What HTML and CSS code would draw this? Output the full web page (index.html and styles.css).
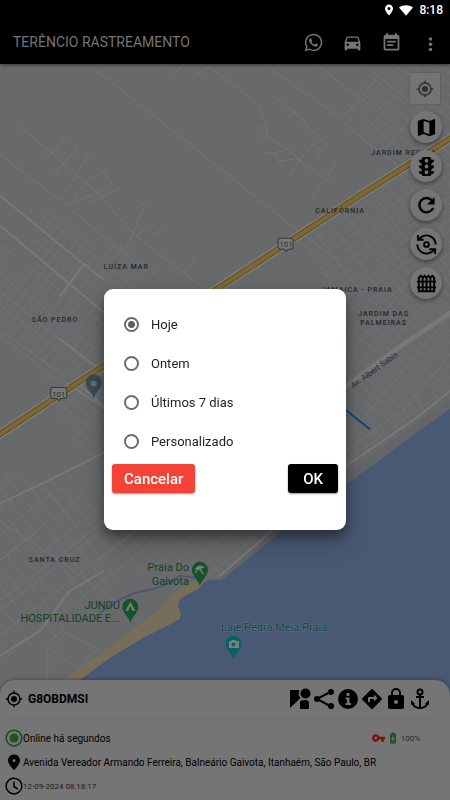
FILE: index.html
```html
<!DOCTYPE html>
<html lang="pt-BR">
<head>
<meta charset="utf-8">
<meta name="viewport" content="width=device-width, initial-scale=1">
<title>Terêncio Rastreamento</title>
<link rel="stylesheet" href="styles.css">
</head>
<body>
<div class="app">
  <header class="top">
    <div class="status">
      <svg class="status-icon" viewBox="0 0 24 24"><path fill-rule="evenodd" d="M12 1C7.600 1 4 4.600 4 9c0 6 8 14 8 14s8-8 8-14c0-4.400-3.600-8-8-8zm0 5a3 3 0 1 1 0 6 3 3 0 0 1 0-6z"/></svg>
      <svg class="status-wifi" viewBox="0 0 24 18"><path d="M12 18L0 4C3.500 1.300 7.600 0 12 0s8.500 1.300 12 4z"/></svg>
      <span>8:18</span>
    </div>
    <div class="appbar">
      <h1>TERÊNCIO RASTREAMENTO</h1>
      <nav class="actions">
        <button aria-label="WhatsApp"><svg viewBox="0 0 24 24"><path d="M12.040 2C6.580 2 2.130 6.450 2.130 11.910C2.130 13.660 2.590 15.360 3.450 16.860L2.050 22L7.300 20.620C8.750 21.410 10.380 21.830 12.040 21.830C17.500 21.830 21.950 17.380 21.950 11.920C21.950 9.270 20.920 6.780 19.050 4.910C17.180 3.030 14.690 2 12.040 2M12.050 3.670C14.250 3.670 16.310 4.530 17.870 6.090C19.420 7.650 20.280 9.720 20.280 11.920C20.280 16.460 16.580 20.150 12.040 20.150C10.560 20.150 9.110 19.760 7.850 19L7.550 18.830L4.430 19.650L5.260 16.610L5.060 16.290C4.240 15 3.800 13.470 3.800 11.910C3.810 7.370 7.500 3.670 12.050 3.670M8.530 7.330C8.370 7.330 8.100 7.390 7.870 7.640C7.650 7.890 7 8.500 7 9.710C7 10.930 7.890 12.100 8 12.270C8.140 12.440 9.760 14.940 12.250 16C12.840 16.270 13.300 16.420 13.660 16.530C14.250 16.720 14.790 16.690 15.220 16.630C15.700 16.560 16.680 16.030 16.890 15.450C17.100 14.870 17.100 14.380 17.040 14.270C16.970 14.170 16.810 14.110 16.560 14C16.310 13.860 15.090 13.260 14.870 13.180C14.640 13.100 14.500 13.060 14.310 13.300C14.150 13.550 13.670 14.110 13.530 14.270C13.380 14.440 13.240 14.460 13 14.340C12.740 14.210 11.940 13.950 11 13.110C10.260 12.450 9.770 11.640 9.620 11.390C9.500 11.150 9.610 11 9.730 10.890C9.840 10.780 10 10.600 10.100 10.450C10.230 10.310 10.270 10.200 10.350 10.040C10.430 9.870 10.390 9.730 10.330 9.610C10.270 9.500 9.770 8.260 9.560 7.770C9.360 7.290 9.160 7.350 9 7.340z"/></svg></button>
        <button aria-label="Veículos"><svg viewBox="0 0 24 24"><path d="M18.920 6.010C18.720 5.420 18.160 5 17.500 5h-11c-.66 0-1.210.42-1.420 1.010L3 12v8c0 .55.45 1 1 1h1c.55 0 1-.45 1-1v-1h12v1c0 .55.45 1 1 1h1c.55 0 1-.45 1-1v-8zM6.500 16a1.500 1.500 0 1 1 0-3 1.500 1.500 0 0 1 0 3zm11 0a1.500 1.500 0 1 1 0-3 1.500 1.500 0 0 1 0 3zM5 11l1.500-4.500h11L19 11z" fill-rule="evenodd"/></svg></button>
        <button aria-label="Relatórios"><svg viewBox="0 0 24 24"><path d="M17 10H7v2h10v-2zm2-7h-1V1h-2v2H8V1H6v2H5c-1.110 0-2 .9-2 2v14c0 1.100.89 2 2 2h14c1.100 0 2-.9 2-2V5c0-1.100-.9-2-2-2zm0 16H5V8h14v11zm-5-5H7v2h7v-2z"/></svg></button>
        <button aria-label="Mais opções"><svg viewBox="0 0 24 24"><circle cx="12" cy="8" r="2"/><circle cx="12" cy="14" r="2"/><circle cx="12" cy="20" r="2"/></svg></button>
      </nav>
    </div>
  </header>

  <main class="map">
    <svg class="map-art" viewBox="0 64 450 630" preserveAspectRatio="xMidYMin slice">
      <defs>
        <pattern id="g1" width="24" height="8" patternUnits="userSpaceOnUse" patternTransform="rotate(-52)"><path d="M0 0H24M0 0V8"/></pattern>
        <pattern id="g2" width="17" height="9" patternUnits="userSpaceOnUse" patternTransform="rotate(-36)"><path d="M0 0H17M0 0V9"/></pattern>
        <pattern id="g3" width="12" height="20" patternUnits="userSpaceOnUse" patternTransform="rotate(-38)"><path d="M0 0H12M0 0V20"/></pattern>
        <pattern id="g4" width="26" height="9" patternUnits="userSpaceOnUse" patternTransform="rotate(40)"><path d="M0 0H26M0 0V9"/></pattern>
      </defs>
      <rect y="64" width="450" height="700" fill="#68696b"/>
      <g class="grid">
        <path fill="url(#g1)" d="M37 222L52 206 94 240 135 250 175 292 240 330 200 340 104 356 50 386 0 340V255l25 25z"/>
        <path fill="url(#g2)" d="M300 236L360 198 450 143V275L395 300 330 290z"/>
        <path fill="url(#g4)" d="M385 66H450V130L402 162 340 110zM345 310L385 285 450 270V380L358 446 345 440z"/>
        <path fill="url(#g4)" d="M50 400L104 368V465L85 460z"/>
        <path fill="url(#g3)" d="M0 460L40 480 104 500V530H278L215 575 170 570 130 575 100 600 60 640 0 660z"/>
        <path fill="url(#g2)" d="M345 440L440 388 450 395 346 470z"/>
      </g>
      <g class="roads">
        <path d="M91 66L160 120 297 230 340 262M165 66l10 7 8-8M185 66l15 8 8-8M208 66l49 37 10 24 1 10 24 16 12 11 30 22M267 66L332 112l28 25 90 68M318 66l60 46 72 54M273 95l20 16 34 35M254 129l14-3M262 140l5-8M264 153l12-1 12-3M276 152l5 15M278 161l22-3M301 158l12-14 9 8-7 10M301 158l-12 18M290 116l4-5 12 10M310 199l28-38M365 66L450 134M395 66L450 108"/>
        <path d="M20 126L95 190 135 235 210 292M0 154L60 200 145 270M47 158L68 135M51 178L78 147M60 200L89 155M66 205L108 189M74 198l13-17 17-10 8 13M91 202L120 188M125 250L145 206 134 197M136 238L156 214M150 237L165 226M182 274L196 257M0 244L14 255M0 290L100 372M0 330L60 372M0 520L60 560 130 610M0 600L60 555 104 520M0 560L38 530M50 640l12-10 36 18-20 20-30-22v32M98 560l60-48M40 486L70 515"/>
      </g>
      <g class="roads major">
        <path d="M0 195L84 264 104 279M84 264L60 296M0 225L104 312M60 338L104 372M66 382L104 407M240 289L300 330M80 385L104 405"/>
        <path d="M0 503L40 484 104 452M345 385L400 347 450 312M220 575L345 466 418 416 450 390M0 655L40 630 70 590 104 570"/>
      </g>
      <path class="avenue" d="M340 390L400 346 452 311"/>
      <path fill="#626365" opacity=".6" d="M450 399L345 473 225 572 220 580 345 484 450 408z"/>
      <path fill="none" stroke="#495973" stroke-width="2" d="M100 612Q125 593 145 590T180 575L204 578"/>
      <path fill="#766e59" d="M192 580L173 593 160 608 125 635 93 658 63 679 45 695H85L185 620 203 583z"/>
      <path fill="#495973" d="M450 408L347 483 281 531 222 579 208 579 203 583 200 587 180 598 178 605 181 613 180 618 167 625 143 637 110 657 80 679 60 695V770H450z"/>
      <path d="M-5 437L104 365 215 290 360 195 455 135" fill="none" stroke="#7c7c79" stroke-width="9"/>
      <path d="M-5 437L104 365 215 290 360 195 455 135" fill="none" stroke="#6a4c1d" stroke-width="6"/>
      <path d="M-5 437L104 365 215 290 360 195 455 135" fill="none" stroke="#7a6937" stroke-width="4"/>
      <path d="M345 409L370 429" stroke="#10477a" stroke-width="2"/>
      <g class="shield"><path d="M279 238h13l1 2v6q0 3-3 3h-2l-2 2-2-2h-3q-3 0-3-3v-6z"/><path d="M52 387h14l1 2v6q0 3-3 3h-3l-2 2-2-2h-3q-3 0-3-3v-6z"/></g>
      <g class="shield-text"><text x="286" y="247">101</text><text x="59" y="396">101</text></g>
      <g class="district">
        <text x="371" y="155">JARDIM REGINA</text><text x="315" y="213">CALIFÓRNIA</text>
        <text x="104" y="269">LUÍZA MAR</text><text x="32" y="322">SÃO PEDRO</text>
        <text x="321" y="292">JAMAICA - PRAIA</text><text x="358" y="316">JARDIM DAS</text><text x="360" y="325">PALMEIRAS</text>
        <text x="29" y="561">SANTA CRUZ</text>
      </g>
      <text class="street" transform="translate(353 388) rotate(-36)">Av. Albert Sabin</text>
      <g class="place">
        <text x="189" y="570">Praia Do</text><text x="189" y="584">Gaivota</text>
        <text x="120" y="608">JUNDU</text><text x="120" y="621">HOSPITALIDADE E...</text>
        <text class="sea" x="327" y="630">Laje Pedra Meia Praia</text>
      </g>
      <g fill="#17512b"><path d="M200 585C198 578 192 575 192 569a8 8 0 0 1 16 0c0 6-6 9-8 16z"/><path d="M130.500 622c-2-7-8-10-8-16a8 8 0 0 1 16 0c0 6-6 9-8 16z"/></g>
      <path fill="#096168" d="M233.500 659c-2-7-8-10-8-16a8 8 0 0 1 16 0c0 6-6 9-8 16z"/>
      <path fill="#3a4b54" fill-rule="evenodd" d="M94 398c-2-7-8-10-8-16a8 8 0 0 1 16 0c0 6-6 9-8 16zM94 380a3 3 0 1 0 0 6 3 3 0 0 0 0-6z"/>
      <g fill="#75827a"><path d="M195 568q4-6 10-1l-4 1-4 2zM200 567l4 6-1 1-4-6z"/><circle cx="196" cy="571" r="1"/><path fill-rule="evenodd" d="M130.500 601l5 9h-10zM130.500 605l-2 5h4z"/><path fill-rule="evenodd" d="M229 640h2l1-1h3l1 1h3v7h-10zM233.500 641.500a2 2 0 1 0 0 4 2 2 0 0 0 0-4z"/></g>
    </svg>

    <div class="tools">
      <button class="tool square" aria-label="Minha localização"><svg viewBox="0 0 24 24"><path fill="none" stroke="currentColor" stroke-width="2" d="M12 1v4M12 19v4M1 12h4M19 12h4M12 4a8 8 0 1 0 0 16 8 8 0 0 0 0-16z"/><circle cx="12" cy="12" r="4"/></svg></button>
      <button class="tool" aria-label="Tipo de mapa"><svg viewBox="0 0 24 24"><path fill-rule="evenodd" d="M20.500 3l-.16.03L15 5.100 9 3 3.360 4.900c-.21.07-.36.25-.36.48V20.500c0 .28.22.5.5.5l.16-.03L9 18.900l6 2.100 5.640-1.900c.21-.07.36-.25.36-.48V3.500c0-.28-.22-.5-.5-.5zM15 19l-6-2.110V5l6 2.110z"/></svg></button>
      <button class="tool" aria-label="Trânsito"><svg viewBox="0 0 24 24"><path fill-rule="evenodd" d="M9 2h6a2 2 0 0 1 2 2v1h3c0 2-1 3-3 4v2h3c0 2-1 3-3 4v2h3c0 2-1 3-3 3a2 2 0 0 1-2 2H9a2 2 0 0 1-2-2c-2 0-3-1-3-3h3v-2c-2-1-3-2-3-4h3V9C5 8 4 7 4 5h3V4a2 2 0 0 1 2-2zm3 2a2 2 0 1 0 0 4 2 2 0 0 0 0-4zm0 6a2 2 0 1 0 0 4 2 2 0 0 0 0-4zm0 6a2 2 0 1 0 0 4 2 2 0 0 0 0-4z"/></svg></button>
      <button class="tool" aria-label="Atualizar"><svg viewBox="0 0 24 24"><path fill="none" stroke="currentColor" stroke-width="2.500" d="M18 7A7.500 7.500 0 1 0 19 14.500"/><path d="M20.500 3v8h-8z"/></svg></button>
      <button class="tool" aria-label="Alternar veículo"><svg viewBox="0 0 24 24"><path fill="none" stroke="currentColor" stroke-width="2" d="M7 4A9.500 9.500 0 0 1 21.500 12M17 20A9.500 9.500 0 0 1 2.500 12M3 2v5h6M21 22v-5h-6M3 7l4-3M21 17l-4 3"/><circle cx="12" cy="12" r="2.500" fill="none" stroke="currentColor" stroke-width="2"/></svg></button>
      <button class="tool" aria-label="Cerca virtual"><svg viewBox="0 0 24 24"><path fill="none" stroke="currentColor" stroke-width="2" d="M2 10h20M2 16h20M4 20V6l2-2 2 2v14M8 6l2-2 2 2v14M12 6l2-2 2 2v14M16 6l2-2 2 2v14M3 20h18"/></svg></button>
    </div>
  </main>

  <section class="sheet">
    <div class="sheet-head">
      <svg class="icon-18" viewBox="0 0 24 24"><path fill="none" stroke="currentColor" stroke-width="2" d="M12 1v4M12 19v4M1 12h4M19 12h4M12 4a8 8 0 1 0 0 16 8 8 0 0 0 0-16z"/><circle cx="12" cy="12" r="4"/></svg>
      <h2>G8OBDMSI</h2>
      <div class="sheet-actions">
        <button aria-label="Street View"><svg viewBox="0 0 24 24"><circle cx="17.500" cy="6.500" r="5"/><path d="M2 4q0-1 1-1h8.500q-2 5 1 8L2 21zM12 14q3-1 5-1 3 0 4 2v6q0 1-1 1h-7q-1 0-1-1z"/></svg></button>
        <button aria-label="Compartilhar"><svg viewBox="0 0 24 24"><path fill="none" stroke="currentColor" stroke-width="2" d="M19 4.500L5 12l14 7.500"/><circle cx="19" cy="5" r="3"/><circle cx="5" cy="12" r="3"/><circle cx="19" cy="19" r="3"/></svg></button>
        <button aria-label="Informações"><svg viewBox="0 0 24 24"><path fill-rule="evenodd" d="M12 2a10 10 0 1 0 0 20 10 10 0 0 0 0-20zm-1.500 4h3v3h-3zm-1 4.500h4V16H15v2H9.500v-2H11v-3.500H9.500z"/></svg></button>
        <button aria-label="Rotas"><svg viewBox="0 0 24 24"><path fill-rule="evenodd" d="M21.710 11.290l-9-9a1 1 0 0 0-1.410 0l-9 9a1 1 0 0 0 0 1.410l9 9c.39.39 1.020.39 1.410 0l9-9a1 1 0 0 0 0-1.410zM14 14.500V12h-4v3H8v-4c0-.55.45-1 1-1h5V7.500l3.500 3.500z"/></svg></button>
        <button aria-label="Bloquear"><svg viewBox="0 0 24 24"><path fill-rule="evenodd" d="M18 8h-1V6A5 5 0 0 0 7 6v2H6a2 2 0 0 0-2 2v10a2 2 0 0 0 2 2h12a2 2 0 0 0 2-2V10a2 2 0 0 0-2-2zm-6 9a2 2 0 1 1 0-4 2 2 0 0 1 0 4zm3-9H9V6a3 3 0 0 1 6 0z"/></svg></button>
        <button aria-label="Âncora"><svg viewBox="0 0 24 24"><path fill="none" stroke="currentColor" stroke-width="2" d="M12 7v14M8 10h8M4 15c1 4 4 6 8 6s7-2 8-6"/><circle cx="12" cy="5" r="2.500" fill="none" stroke="currentColor" stroke-width="2"/><path d="M3 13l4 4-4 1zM21 13l-4 4 4 1z"/></svg></button>
      </div>
    </div>
    <div class="row">
      <svg class="icon-18 online" viewBox="0 0 24 24"><circle cx="12" cy="12" r="10.500" fill="none" stroke="currentColor" stroke-width="2"/><circle class="core" cx="12" cy="12" r="6"/></svg>
      <span>Online há segundos</span>
      <div class="power">
        <svg class="key" viewBox="0 0 24 14"><path fill-rule="evenodd" d="M7 0a7 7 0 1 0 6.500 9.500H17V14h5V9.500h2V4.500H13.500A7 7 0 0 0 7 0zm0 4.500a2.500 2.500 0 1 1 0 5 2.500 2.500 0 0 1 0-5z"/></svg>
        <svg class="battery" viewBox="0 0 12 22"><path d="M4 0h4v2h3q1 0 1 1v18q0 1-1 1H1q-1 0-1-1V3q0-1 1-1h3z"/><path class="bolt" d="M7 6v5h3l-5 8v-6H2z"/></svg>
        <span>100%</span>
      </div>
    </div>
    <div class="row">
      <svg class="icon-18" viewBox="0 0 24 24"><path fill-rule="evenodd" d="M12 2c-5 0-8 4-8 8 0 5 8 13 8 13s8-8 8-13c0-4-3-8-8-8zm0 6a2 2 0 1 1 0 4 2 2 0 0 1 0-4z"/></svg>
      <span>Avenida Vereador Armando Ferreira, Balneário Gaivota, Itanhaém, São Paulo, BR</span>
    </div>
    <div class="row">
      <svg class="icon-18" viewBox="0 0 24 24"><path fill="none" stroke="currentColor" stroke-width="2" d="M12 1.500a10.500 10.500 0 1 0 0 21 10.500 10.500 0 0 0 0-21zM12 6v7l5 3"/></svg>
      <time>12-09-2024 08:18:17</time>
    </div>
  </section>
</div>

<div class="overlay">
  <form class="dialog" role="dialog" aria-label="Período">
    <label class="option"><input type="radio" name="periodo" checked><span>Hoje</span></label>
    <label class="option"><input type="radio" name="periodo"><span>Ontem</span></label>
    <label class="option"><input type="radio" name="periodo"><span>Últimos 7 dias</span></label>
    <label class="option"><input type="radio" name="periodo"><span>Personalizado</span></label>
    <div class="buttons">
      <button class="btn cancel" type="button">Cancelar</button>
      <button class="btn ok" type="button">OK</button>
    </div>
  </form>
</div>
</body>
</html>
```
FILE: styles.css
```css
* { box-sizing: border-box; }

body {
  margin: 0;
  background: #757575;
  color: #000;
  font-family: Roboto, "Liberation Sans", sans-serif;
  font-size: 10px;
}

button {
  padding: 0;
  border: 0;
  background: none;
  color: inherit;
  font-family: inherit;
}

svg { display: block; fill: currentColor; }
h1, h2 { margin: 0; }

.app {
  display: flex;
  flex-direction: column;
  min-height: 100vh;
}

/* Top bars */
.top {
  position: relative;
  z-index: 1;
  background: #000;
  color: #757575;
  box-shadow: 0 1px 3px rgba(0, 0, 0, .5);
}

.status {
  display: flex;
  align-items: center;
  justify-content: flex-end;
  gap: 4px;
  height: 20px;
  padding: 0 7px;
  color: #fff;
  font-size: 12px;
  font-weight: 500;
}
.status-icon { width: 12px; height: 12px; }
.status-wifi { width: 14px; height: 11px; margin-right: 2px; }

.appbar {
  display: flex;
  align-items: center;
  justify-content: space-between;
  height: 44px;
  padding: 0 9px 0 13px;
}
.appbar h1 { font-size: 14px; font-weight: 400; }

.actions { display: flex; gap: 18px; }
.actions svg { width: 21px; height: 21px; }

/* Map */
.map {
  position: relative;
  flex: 1;
  min-height: 320px;
  background: #68696b;
}
.map-art {
  position: absolute;
  inset: 0;
  width: 100%;
  height: calc(100% + 15px);
}
.map-art pattern path { fill: none; stroke: #747576; }
.roads { fill: none; stroke: #727374; }
.major { stroke: #777879; stroke-width: 2; }
.avenue { fill: none; stroke: #777879; stroke-width: 5; }
.shield { fill: #777879; stroke: #38393b; }
.shield-text {
  fill: #2c2d2f;
  font-size: 8px;
  text-anchor: middle;
}
.district {
  fill: #252628;
  font-size: 7px;
  font-weight: 500;
  letter-spacing: 1px;
}
.street { fill: #2c2d2f; font-size: 8px; }
.place {
  fill: #143f23;
  font-size: 11px;
  text-anchor: end;
}
.place .sea {
  fill: #12424a;
  stroke: #66757f;
  stroke-width: 1px;
  paint-order: stroke;
}

.tools {
  position: relative;
  display: flex;
  flex-direction: column;
  align-items: flex-end;
  gap: 7px;
  padding: 9px 8px 0 0;
}
.tool {
  display: grid;
  place-items: center;
  width: 32px;
  height: 32px;
  border-radius: 50%;
  background: #757575;
  box-shadow: 0 2px 4px rgba(0, 0, 0, .4);
}
.tool svg { width: 23px; height: 23px; }
.square {
  margin-right: 2px;
  width: 30px;
  height: 31px;
  border-radius: 1px;
  background: #727374;
  color: #303030;
  box-shadow: 0 0 2px rgba(0, 0, 0, .3);
}
.square svg { width: 18px; height: 18px; }

/* Vehicle sheet */
.sheet {
  position: relative;
  padding: 0 18px 2px 5px;
  border-radius: 15px 15px 0 0;
  background: #757575;
  box-shadow: 0 0 4px rgba(0, 0, 0, .4);
}
.sheet-head {
  display: flex;
  align-items: center;
  gap: 5px;
  height: 39px;
  border-bottom: 1px solid #6d6d6d;
  margin-bottom: 7px;
}
.sheet-head h2 { font-size: 12px; font-weight: 700; }
.sheet-actions { display: flex; margin-left: auto; }
.sheet-actions svg { width: 24px; height: 24px; }
.icon-18 { flex: none; width: 18px; height: 18px; }

.row {
  display: flex;
  align-items: center;
  min-height: 24px;
}
.row time { font-size: 8px; color: #1c1c1c; }
.online { color: #0f4f14; }
.core { fill: #235126; }

.power {
  display: flex;
  align-items: center;
  gap: 5px;
  margin-left: auto;
  padding-right: 12px;
  color: #2a2a2a;
  font-size: 8px;
}
.key { width: 13px; height: 8px; color: #7a1510; }
.battery { width: 6px; height: 12px; color: #235126; }
.bolt { fill: #757575; }

/* Period dialog */
.overlay {
  position: fixed;
  inset: 19px 0 0;
  z-index: 2;
  display: grid;
  place-items: center;
}
.dialog {
  width: 242px;
  max-width: 90%;
  padding: 16px 8px 37px;
  border-radius: 9px;
  background: #fff;
  box-shadow: 0 6px 10px 1px rgba(0, 0, 0, .3), 0 12px 24px rgba(0, 0, 0, .25);
}
.option {
  display: flex;
  align-items: center;
  gap: 12px;
  height: 39px;
  padding-left: 12px;
  color: #1f1f1f;
  font-size: 13px;
}
.option input {
  appearance: none;
  width: 15px;
  height: 15px;
  margin: 0;
  border: 2px solid #6b6b6b;
  border-radius: 50%;
}
.option input:checked {
  background: radial-gradient(circle, #5f5f5f 3px, transparent 4px);
}
.buttons {
  display: flex;
  justify-content: space-between;
  margin-top: 3px;
}
.btn {
  height: 29px;
  border-radius: 3px;
  color: #fff;
  font-size: 15px;
  font-weight: 500;
  box-shadow: 0 1px 2px rgba(0, 0, 0, .4);
}
.cancel { padding: 0 12px; background: #f44336; }
.ok { padding: 0 15px; background: #000; }
```
